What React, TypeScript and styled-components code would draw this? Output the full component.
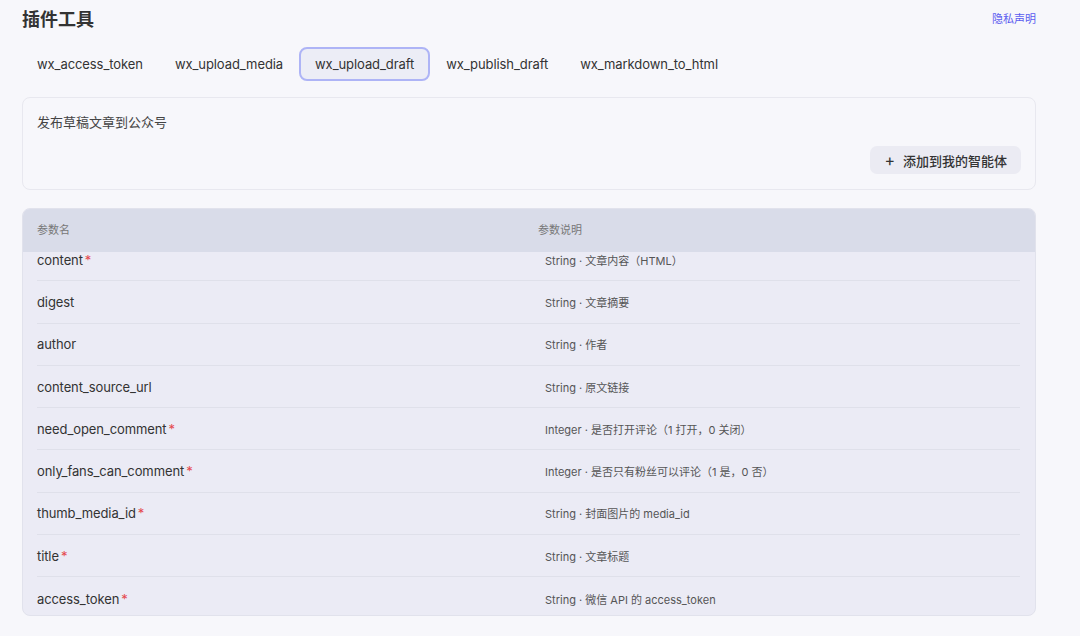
import React from 'react';
import styled, { createGlobalStyle } from 'styled-components';

const GlobalStyle = createGlobalStyle`
  html, body {
    margin: 0;
    padding: 0;
    background: #f7f7fb;
  }
  body {
    font-family: Inter, "Noto Sans CJK SC", sans-serif;
    color: #333;
  }
`;

const Page = styled.div`
  width: 1080px;
  height: 636px;
  box-sizing: border-box;
  padding: 0 44px 0 22px;
  overflow: hidden;
  display: flex;
  flex-direction: column;
`;

const TopBar = styled.div`
  display: flex;
  align-items: center;
  justify-content: space-between;
  height: 36px;
`;

const Title = styled.h1`
  margin: 0;
  font-size: 18px;
  font-weight: 600;
  color: #333;
`;

const PrivacyLink = styled.a`
  font-size: 11px;
  color: #5b5cf0;
  text-decoration: none;
`;

const Tabs = styled.div`
  display: flex;
  margin: 11px 0 0 -1px;
  height: 34px;
`;

const Tab = styled.div<{ $active?: boolean }>`
  display: flex;
  align-items: center;
  box-sizing: border-box;
  padding: 0 14px;
  font-size: 13px;
  letter-spacing: -0.08px;
  color: #333;
  border-radius: 8px;
  border: 2px solid ${({ $active }) => ($active ? '#aeb4f6' : 'transparent')};
  background: ${({ $active }) => ($active ? '#ecedf6' : 'transparent')};
`;

const DescCard = styled.div`
  margin-top: 16px;
  height: 93px;
  box-sizing: border-box;
  border: 1px solid #e8e8ef;
  border-radius: 8px;
  padding: 14px 14px 15px 14px;
  display: flex;
  flex-direction: column;
  justify-content: space-between;
`;

const DescText = styled.div`
  font-size: 13px;
  color: #444;
`;

const AddButton = styled.button`
  align-self: flex-end;
  display: flex;
  align-items: center;
  gap: 8px;
  height: 28px;
  padding: 0 14px;
  border: none;
  border-radius: 7px;
  background: #ebebf3;
  font-family: inherit;
  font-size: 13px;
  font-weight: 500;
  color: #333;
`;

const Plus = styled.span`
  font-size: 16px;
  font-weight: 400;
  line-height: 1;
`;

const Table = styled.div`
  margin-top: 18px;
  height: 408px;
  box-sizing: border-box;
  border: 1px solid #e1e2ec;
  border-radius: 8px;
  background: #ebebf5;
  overflow: hidden;
  display: flex;
  flex-direction: column;
`;

const HeaderRow = styled.div`
  display: grid;
  grid-template-columns: 501px 1fr;
  align-items: center;
  height: 43px;
  box-sizing: border-box;
  padding: 0 0 3px 14px;
  flex-shrink: 0;
  background: #d9dce9;
  font-size: 11px;
  color: #777;
  position: relative;
  z-index: 1;
`;

const Body = styled.div`
  flex: 1;
  overflow: hidden;
`;

const Rows = styled.div`
  margin-top: -13px;
`;

const Row = styled.div`
  display: grid;
  grid-template-columns: 508px 1fr;
  align-items: center;
  height: 42.3px;
  margin: 0 15px 0 14px;
  border-bottom: 1px solid #dfe0ea;
  box-sizing: border-box;

  &:last-child {
    border-bottom: none;
  }
`;

const Name = styled.div`
  font-size: 13px;
  letter-spacing: -0.1px;
  color: #333;
`;

const Required = styled.span`
  color: #e5484d;
  margin-left: 2px;
`;

const Desc = styled.div`
  font-size: 11px;
  color: #555;
`;

const tabs = ['wx_access_token', 'wx_upload_media', 'wx_upload_draft', 'wx_publish_draft', 'wx_markdown_to_html'];

const params: { name: string; required: boolean; desc: string }[] = [
  { name: 'content', required: true, desc: 'String · 文章内容（HTML）' },
  { name: 'digest', required: false, desc: 'String · 文章摘要' },
  { name: 'author', required: false, desc: 'String · 作者' },
  { name: 'content_source_url', required: false, desc: 'String · 原文链接' },
  { name: 'need_open_comment', required: true, desc: 'Integer · 是否打开评论（1 打开，0 关闭）' },
  { name: 'only_fans_can_comment', required: true, desc: 'Integer · 是否只有粉丝可以评论（1 是，0 否）' },
  { name: 'thumb_media_id', required: true, desc: 'String · 封面图片的 media_id' },
  { name: 'title', required: true, desc: 'String · 文章标题' },
  { name: 'access_token', required: true, desc: 'String · 微信 API 的 access_token' },
];

export default function App() {
  return (
    <>
      <GlobalStyle />
      <Page>
        <TopBar>
          <Title>插件工具</Title>
          <PrivacyLink href="#">隐私声明</PrivacyLink>
        </TopBar>
        <Tabs>
          {tabs.map((t) => (
            <Tab key={t} $active={t === 'wx_upload_draft'}>
              {t}
            </Tab>
          ))}
        </Tabs>
        <DescCard>
          <DescText>发布草稿文章到公众号</DescText>
          <AddButton>
            <Plus>+</Plus>
            添加到我的智能体
          </AddButton>
        </DescCard>
        <Table>
          <HeaderRow>
            <span>参数名</span>
            <span>参数说明</span>
          </HeaderRow>
          <Body>
            <Rows>
              {params.map((p) => (
                <Row key={p.name}>
                  <Name>
                    {p.name}
                    {p.required && <Required>*</Required>}
                  </Name>
                  <Desc>{p.desc}</Desc>
                </Row>
              ))}
            </Rows>
          </Body>
        </Table>
      </Page>
    </>
  );
}
